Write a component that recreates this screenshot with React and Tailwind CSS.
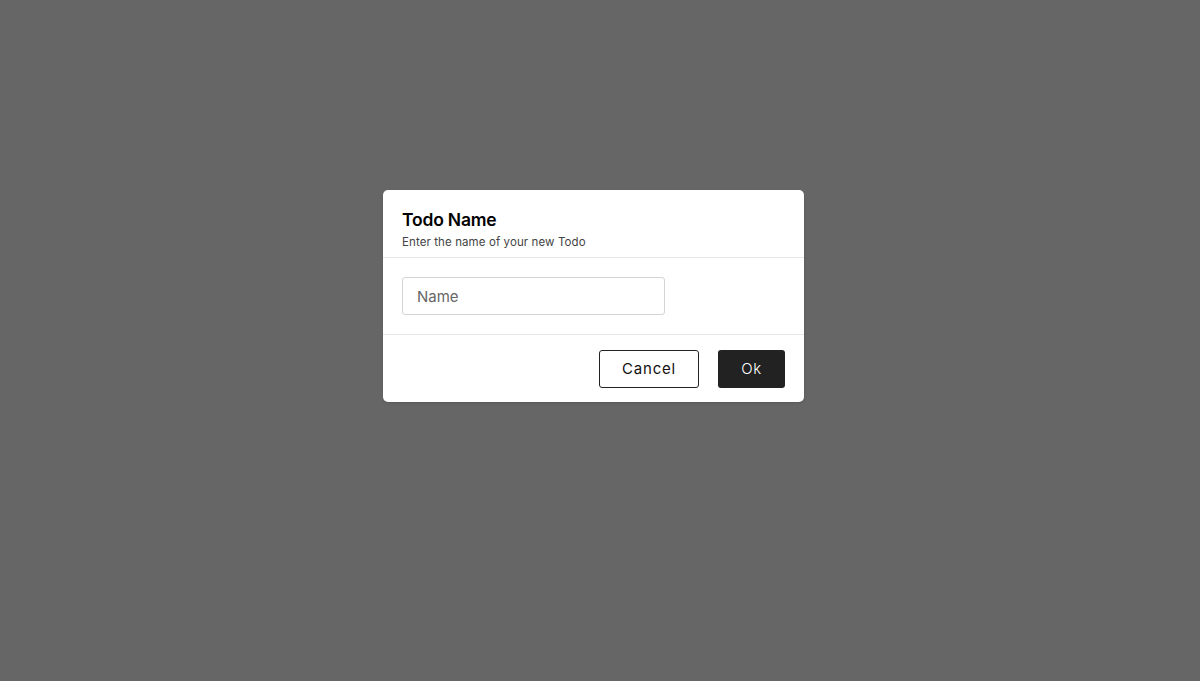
export default function App() {
  return (
    <div
      className="w-full h-[681px] bg-[#666666] flex justify-center pr-[13px]"
      style={{ fontFamily: 'Inter, "Noto Sans", sans-serif' }}
    >
      <div className="mt-[190px] w-[421px] h-[212px] bg-white rounded-[5px] shadow-sm flex flex-col">
        {/* Header */}
        <div className="px-[19px] pt-[19px] pb-[7px] border-b border-[#e8e8e8]">
          <h2 className="text-[17.5px] leading-[22px] font-semibold text-black tracking-[-0.2px]">Todo Name</h2>
          <p className="text-[11.5px] leading-[16px] mt-[3px] text-[#444] tracking-[0.1px]">Enter the name of your new Todo</p>
        </div>

        {/* Body */}
        <div className="px-[19px] py-[19px] border-b border-[#e8e8e8]">
          <input
            type="text"
            placeholder="Name"
            className="w-[263px] h-[38px] px-[14px] text-[15px] border border-[#d4d4d4] rounded-[3px] outline-none placeholder:text-[#666] text-[#222]"
          />
        </div>

        {/* Footer */}
        <div className="flex justify-end gap-[19px] pl-[19px] pr-[19px] pt-[15px]">
          <button className="w-[100px] h-[38px] border border-[#222] rounded-[3px] bg-white text-[15px] text-[#111] tracking-[0.8px]">
            Cancel
          </button>
          <button className="w-[67px] h-[38px] rounded-[3px] bg-[#222222] text-[15px] font-light text-white tracking-[0.5px]">
            Ok
          </button>
        </div>
      </div>
    </div>
  );
}
